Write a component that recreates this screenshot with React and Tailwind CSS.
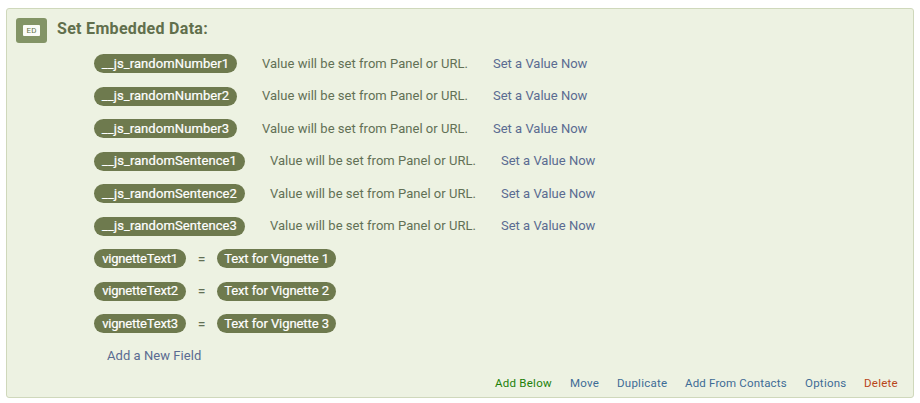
const pending = [
  { name: '__js_randomNumber1', wide: false },
  { name: '__js_randomNumber2', wide: false },
  { name: '__js_randomNumber3', wide: false },
  { name: '__js_randomSentence1', wide: true },
  { name: '__js_randomSentence2', wide: true },
  { name: '__js_randomSentence3', wide: true },
];

function Pill({ size, children }) {
  return (
    <span className={`flex h-[19px] shrink-0 items-center justify-center rounded-full bg-[#6e7a4e] text-white [-webkit-text-stroke:0.2px_white] ${size}`}>
      {children}
    </span>
  );
}

function Row({ children }) {
  return <div className="flex h-[32.5px] items-center">{children}</div>;
}

export default function App() {
  return (
    <div className="h-[403px] w-[920px] bg-white pt-2 pl-1.5 font-['Roboto',sans-serif] text-[13px] leading-[18px] whitespace-nowrap text-[#627055]">
      <div className="flex h-[390px] w-[908px] flex-col rounded-[3px] border border-[#cfd8bb] bg-[#edf2e2]">
        <div className="flex h-[38.3px] pt-[9px] pl-[9px]">
          <div className="flex h-[25px] w-[31px] items-center justify-center rounded-[3px] bg-[#839466]">
            <span className="flex h-[11px] w-[17px] items-center justify-center rounded-[1px] bg-[#fbfcf8] text-[8px] leading-none text-[#66744c]">ED</span>
          </div>
          <h1 className="ml-[10px] text-[16px] leading-[22px] font-bold tracking-[0.31px] text-[#616f4c]">Set Embedded Data:</h1>
        </div>
        <div className="pl-[87px]">
          {pending.map(({ name, wide }) => (
            <Row key={name}>
              <Pill size={wide ? 'w-[151px] tracking-[0.09px]' : 'w-[143px] tracking-[0.09px]'}>{name}</Pill>
              <span className="ml-[25px] w-[231px] tracking-[0.03px]">Value will be set from Panel or URL.</span>
              <a className="text-[#5a6b91]">Set a Value Now</a>
            </Row>
          ))}
          {[1, 2, 3].map((n) => (
            <Row key={n}>
              <Pill size="w-[92px] tracking-[-0.2px]">vignetteText{n}</Pill>
              <span className="w-[31px] text-center text-[14px]">=</span>
              <Pill size="w-[119px] tracking-[-0.08px]"><span>Text for Vignette {n}</span></Pill>
            </Row>
          ))}
          <Row>
            <a className="ml-[13px] tracking-[0.05px] text-[#5a6b91]">Add a New Field</a>
          </Row>
        </div>
        <div className="flex pl-[488px] text-[11.5px] leading-[23px] tracking-[0.25px] text-[#3d6c96]">
          <a className="w-[75px] text-[#1c8109]">Add Below</a>
          <a className="w-[47px]">Move</a>
          <a className="w-[68px]">Duplicate</a>
          <a className="w-[120px] tracking-[0.17px]">Add From Contacts</a>
          <a className="w-[59px]">Options</a>
          <a className="text-[#b9461a]">Delete</a>
        </div>
      </div>
    </div>
  );
}
